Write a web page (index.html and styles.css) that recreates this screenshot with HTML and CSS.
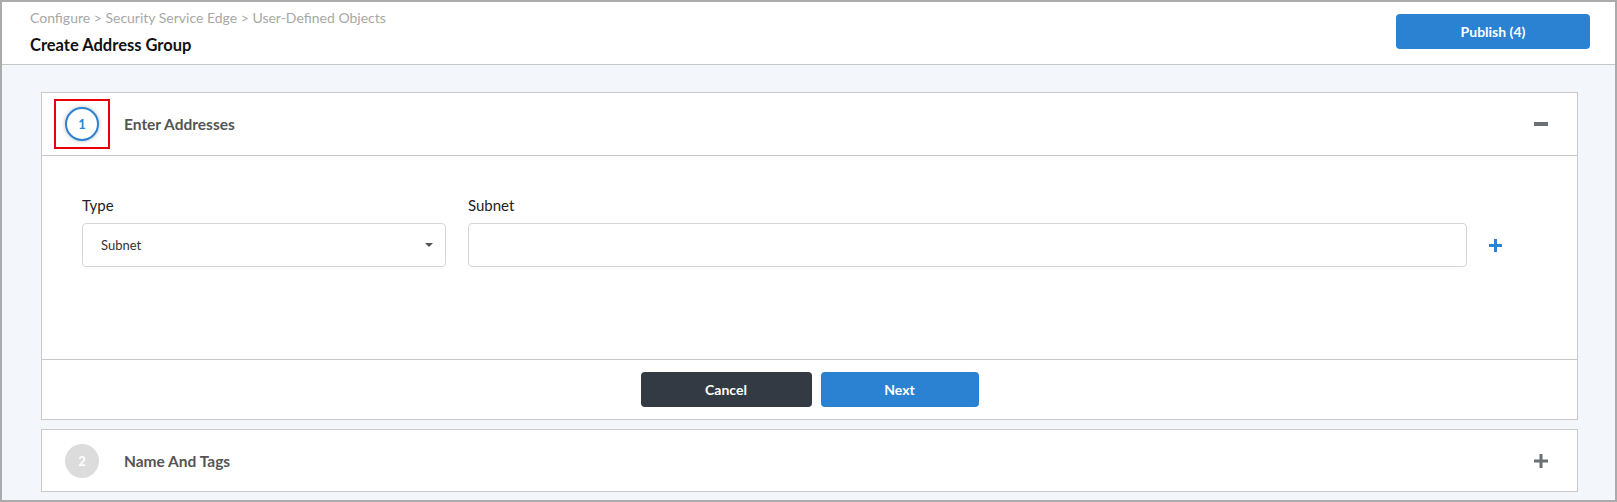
FILE: index.html
```
<!DOCTYPE html>
<html lang="en">
<head>
  <meta charset="UTF-8">
  <title>Create Address Group</title>
  <link rel="stylesheet" href="styles.css">
</head>
<body>
  <div class="frame">
    <div class="topbar">
      <div class="titles">
        <div class="crumbs">Configure &gt; Security Service Edge &gt; User-Defined Objects</div>
        <div class="page-title">Create Address Group</div>
      </div>
      <button class="btn btn-blue publish">Publish (4)</button>
    </div>
    <div class="main">
      <div class="card">
        <div class="card-head">
          <div class="step-box active-box"><span class="step active">1</span></div>
          <span class="step-name">Enter Addresses</span>
          <span class="toggle minus"></span>
        </div>
        <div class="card-body">
          <div class="field type-field">
            <label>Type</label>
            <div class="select">Subnet<span class="caret"></span></div>
          </div>
          <div class="field subnet-field">
            <label>Subnet</label>
            <div class="input"></div>
          </div>
          <span class="add">
            <svg width="13" height="13" viewBox="0 0 13 13"><path d="M5 0h3v5h5v3H8v5H5V8H0V5h5z" fill="#2b82d3"/></svg>
          </span>
        </div>
        <div class="card-foot">
          <button class="btn btn-dark cancel">Cancel</button>
          <button class="btn btn-blue next">Next</button>
        </div>
      </div>
      <div class="card">
        <div class="card-head">
          <div class="step-box"><span class="step">2</span></div>
          <span class="step-name">Name And Tags</span>
          <span class="toggle">
            <svg width="14" height="14" viewBox="0 0 14 14"><path d="M5.5 0h3v5.5H14v3H8.5V14h-3V8.5H0v-3h5.5z" fill="#6b7075"/></svg>
          </span>
        </div>
      </div>
    </div>
  </div>
</body>
</html>
```

FILE: styles.css
```
* {
  margin: 0;
  padding: 0;
  box-sizing: border-box;
}
body {
  font-family: Lato, "Liberation Sans", sans-serif;
  color: #222;
}
.frame {
  height: 100vh;
  border: 2px solid #ababab;
  display: flex;
  flex-direction: column;
  overflow: hidden;
}
.topbar {
  height: 63px;
  flex-shrink: 0;
  background: #fff;
  border-bottom: 1px solid #c6c6c6;
  display: flex;
  justify-content: space-between;
  padding: 0 25px 0 28px;
}
.crumbs {
  font-size: 14px;
  color: #a8a8a8;
  margin-top: 7px;
  line-height: 17px;
}
.page-title {
  font-size: 16.5px;
  font-weight: 700;
  color: #111;
  margin-top: 9px;
  line-height: 20px;
}
.btn {
  font-family: Lato, "Liberation Sans", sans-serif;
  font-size: 14px;
  font-weight: 700;
  color: #fff;
  border: none;
  border-radius: 4px;
  height: 35px;
}
.btn-blue {
  background: #2b82d3;
}
.btn-dark {
  background: #343a44;
}
.publish {
  width: 194px;
  margin-top: 12px;
}
.main {
  flex: 1;
  min-height: 0;
  background: #f3f6fa;
  padding: 27px 37px 0 39px;
}
.card {
  background: #fff;
  border: 1px solid #c9c9c9;
  margin-bottom: 9px;
}
.card-head {
  height: 62px;
  display: flex;
  align-items: center;
  padding: 0 29px 0 12px;
}
.card-body + .card-foot,
.card-head + .card-body {
  border-top: 1px solid #c9c9c9;
}
.card .card-head:only-child {
  height: 61px;
}
.step-box {
  border: 2px solid transparent;
  padding: 6px 9px;
  display: flex;
}
.active-box {
  border-color: #e8000b;
}
.step {
  width: 34px;
  height: 34px;
  border-radius: 50%;
  background: #dcdcdc;
  color: #fff;
  font-size: 13px;
  font-weight: 700;
  display: flex;
  align-items: center;
  justify-content: center;
}
.step.active {
  background: #fff;
  border: 2px solid #2b82d3;
  color: #2b82d3;
  box-shadow: 0 0 4px rgba(0, 0, 0, 0.25);
}
.step-name {
  margin-left: 14px;
  font-size: 15.5px;
  font-weight: 700;
  color: #555;
  flex: 1;
}
.toggle {
  width: 14px;
  height: 14px;
  display: flex;
  align-items: center;
}
.minus::before {
  content: "";
  display: block;
  width: 14px;
  height: 4px;
  background: #6b7075;
}
.card-body {
  height: 204px;
  display: flex;
  align-items: flex-end;
  padding: 0 0 92px 40px;
}
.field label {
  display: block;
  font-size: 15px;
  line-height: 18px;
  margin-bottom: 9px;
  color: #222;
}
.type-field {
  width: 364px;
}
.subnet-field {
  width: 999px;
  margin-left: 22px;
}
.select,
.input {
  height: 44px;
  border: 1px solid #d6d6d6;
  border-radius: 4px;
}
.select {
  display: flex;
  align-items: center;
  justify-content: space-between;
  padding: 0 12px 0 18px;
  font-size: 13px;
  color: #333;
}
.caret {
  border-left: 4px solid transparent;
  border-right: 4px solid transparent;
  border-top: 4px solid #555;
}
.add {
  margin-left: 22px;
  height: 44px;
  display: flex;
  align-items: center;
}
.card-foot {
  height: 60px;
  display: flex;
  justify-content: center;
  align-items: flex-start;
  padding-top: 12px;
  gap: 9px;
}
.cancel {
  width: 171px;
}
.next {
  width: 158px;
}
```
